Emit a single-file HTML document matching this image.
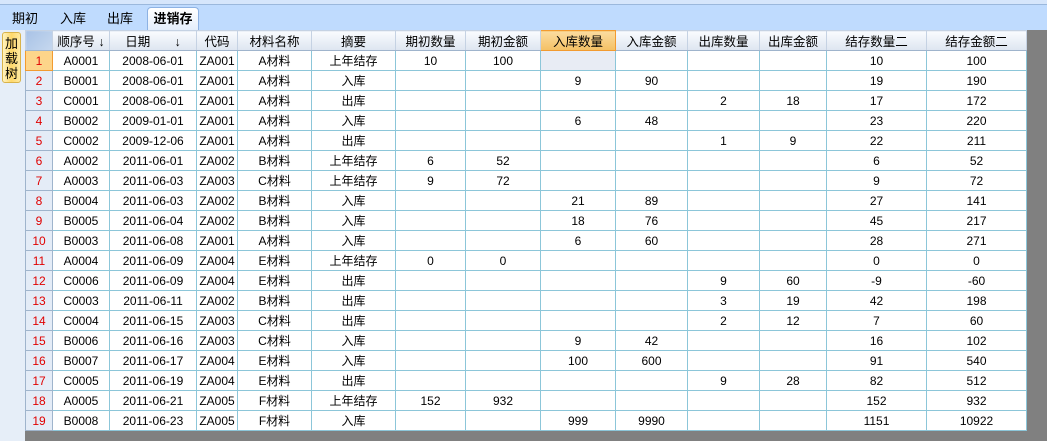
<!DOCTYPE html>
<html><head><meta charset="utf-8"><style>
*{margin:0;padding:0;box-sizing:border-box}
body{width:1047px;height:441px;overflow:hidden;background:#808080;font-family:"Liberation Sans","Noto Sans CJK SC",sans-serif;font-size:12px;position:relative}
#top{position:absolute;left:0;top:0;width:1047px;height:5px;background:#d6e6fb;border-bottom:1px solid #9bb8dc}
#tabs{position:absolute;left:0;top:5px;width:1047px;height:25px;background:#bfdbfe}
.tab{position:absolute;top:4px;height:21px;line-height:20px;font-size:13px;color:#000}
.act{left:147px;width:52px;top:2px;height:23px;border:1px solid #8db2e3;border-bottom:none;border-radius:4px 4px 0 0;background:linear-gradient(#ffffff,#e4eefb);font-weight:bold;text-align:center;line-height:21px}
#left{position:absolute;left:0;top:30px;width:25px;height:411px;background:#e6eef8}
#btn{position:absolute;left:2px;top:2px;width:19px;height:51px;border:1px solid #d9b34a;border-radius:3px;background:linear-gradient(90deg,#fff3c0,#ffd86a,#ffe9a0);font-size:13px;line-height:15px;text-align:center;padding-top:3px;color:#000}
table{position:absolute;left:25px;top:30px;border-collapse:collapse;table-layout:fixed;width:1001px;background:#fff}
td,th{height:20px;border:1px solid #8cc6d9;text-align:center;font-weight:normal;white-space:nowrap;overflow:hidden;padding:0}
th{background:linear-gradient(#f9fbfe,#dde5f0);border-color:#c5d2e3;border-bottom:1px solid #9fb4cc;font-size:12.5px}
th.sel{background:linear-gradient(#fbdca0,#f4c064);border:1px solid #f29b30}
th.corner{background:linear-gradient(135deg,#a9c3e6,#c6d8ef)}
td.rh{background:#e4ecf7;color:#e00000;border-color:#9fb4cc}
td.rh1{background:#fdd58a;border:1px solid #f29b30}
td.hl{background:#e8ecf4}
</style></head><body>
<div id="top"></div>
<div id="tabs">
<div class="tab" style="left:12px">期初</div>
<div class="tab" style="left:60px">入库</div>
<div class="tab" style="left:107px">出库</div>
<div class="tab act">进销存</div>
</div>
<div id="left"><div id="btn">加<br>载<br>树</div></div>
<table>
<colgroup><col style="width:27px"><col style="width:57px"><col style="width:87px"><col style="width:41px"><col style="width:74px"><col style="width:84px"><col style="width:70px"><col style="width:75px"><col style="width:75px"><col style="width:72px"><col style="width:72px"><col style="width:67px"><col style="width:100px"><col style="width:100px"></colgroup>
<tr><th class="corner"></th><th>顺序号 ↓</th><th>日期 &nbsp; &nbsp; &nbsp; ↓</th><th>代码</th><th>材料名称</th><th>摘要</th><th>期初数量</th><th>期初金额</th><th class="sel">入库数量</th><th>入库金额</th><th>出库数量</th><th>出库金额</th><th>结存数量二</th><th>结存金额二</th></tr>
<tr><td class="rh rh1">1</td><td>A0001</td><td>2008-06-01</td><td>ZA001</td><td>A材料</td><td>上年结存</td><td>10</td><td>100</td><td class="hl"></td><td></td><td></td><td></td><td>10</td><td>100</td></tr>
<tr><td class="rh">2</td><td>B0001</td><td>2008-06-01</td><td>ZA001</td><td>A材料</td><td>入库</td><td></td><td></td><td>9</td><td>90</td><td></td><td></td><td>19</td><td>190</td></tr>
<tr><td class="rh">3</td><td>C0001</td><td>2008-06-01</td><td>ZA001</td><td>A材料</td><td>出库</td><td></td><td></td><td></td><td></td><td>2</td><td>18</td><td>17</td><td>172</td></tr>
<tr><td class="rh">4</td><td>B0002</td><td>2009-01-01</td><td>ZA001</td><td>A材料</td><td>入库</td><td></td><td></td><td>6</td><td>48</td><td></td><td></td><td>23</td><td>220</td></tr>
<tr><td class="rh">5</td><td>C0002</td><td>2009-12-06</td><td>ZA001</td><td>A材料</td><td>出库</td><td></td><td></td><td></td><td></td><td>1</td><td>9</td><td>22</td><td>211</td></tr>
<tr><td class="rh">6</td><td>A0002</td><td>2011-06-01</td><td>ZA002</td><td>B材料</td><td>上年结存</td><td>6</td><td>52</td><td></td><td></td><td></td><td></td><td>6</td><td>52</td></tr>
<tr><td class="rh">7</td><td>A0003</td><td>2011-06-03</td><td>ZA003</td><td>C材料</td><td>上年结存</td><td>9</td><td>72</td><td></td><td></td><td></td><td></td><td>9</td><td>72</td></tr>
<tr><td class="rh">8</td><td>B0004</td><td>2011-06-03</td><td>ZA002</td><td>B材料</td><td>入库</td><td></td><td></td><td>21</td><td>89</td><td></td><td></td><td>27</td><td>141</td></tr>
<tr><td class="rh">9</td><td>B0005</td><td>2011-06-04</td><td>ZA002</td><td>B材料</td><td>入库</td><td></td><td></td><td>18</td><td>76</td><td></td><td></td><td>45</td><td>217</td></tr>
<tr><td class="rh">10</td><td>B0003</td><td>2011-06-08</td><td>ZA001</td><td>A材料</td><td>入库</td><td></td><td></td><td>6</td><td>60</td><td></td><td></td><td>28</td><td>271</td></tr>
<tr><td class="rh">11</td><td>A0004</td><td>2011-06-09</td><td>ZA004</td><td>E材料</td><td>上年结存</td><td>0</td><td>0</td><td></td><td></td><td></td><td></td><td>0</td><td>0</td></tr>
<tr><td class="rh">12</td><td>C0006</td><td>2011-06-09</td><td>ZA004</td><td>E材料</td><td>出库</td><td></td><td></td><td></td><td></td><td>9</td><td>60</td><td>-9</td><td>-60</td></tr>
<tr><td class="rh">13</td><td>C0003</td><td>2011-06-11</td><td>ZA002</td><td>B材料</td><td>出库</td><td></td><td></td><td></td><td></td><td>3</td><td>19</td><td>42</td><td>198</td></tr>
<tr><td class="rh">14</td><td>C0004</td><td>2011-06-15</td><td>ZA003</td><td>C材料</td><td>出库</td><td></td><td></td><td></td><td></td><td>2</td><td>12</td><td>7</td><td>60</td></tr>
<tr><td class="rh">15</td><td>B0006</td><td>2011-06-16</td><td>ZA003</td><td>C材料</td><td>入库</td><td></td><td></td><td>9</td><td>42</td><td></td><td></td><td>16</td><td>102</td></tr>
<tr><td class="rh">16</td><td>B0007</td><td>2011-06-17</td><td>ZA004</td><td>E材料</td><td>入库</td><td></td><td></td><td>100</td><td>600</td><td></td><td></td><td>91</td><td>540</td></tr>
<tr><td class="rh">17</td><td>C0005</td><td>2011-06-19</td><td>ZA004</td><td>E材料</td><td>出库</td><td></td><td></td><td></td><td></td><td>9</td><td>28</td><td>82</td><td>512</td></tr>
<tr><td class="rh">18</td><td>A0005</td><td>2011-06-21</td><td>ZA005</td><td>F材料</td><td>上年结存</td><td>152</td><td>932</td><td></td><td></td><td></td><td></td><td>152</td><td>932</td></tr>
<tr><td class="rh">19</td><td>B0008</td><td>2011-06-23</td><td>ZA005</td><td>F材料</td><td>入库</td><td></td><td></td><td>999</td><td>9990</td><td></td><td></td><td>1151</td><td>10922</td></tr>
</table>
</body></html>
